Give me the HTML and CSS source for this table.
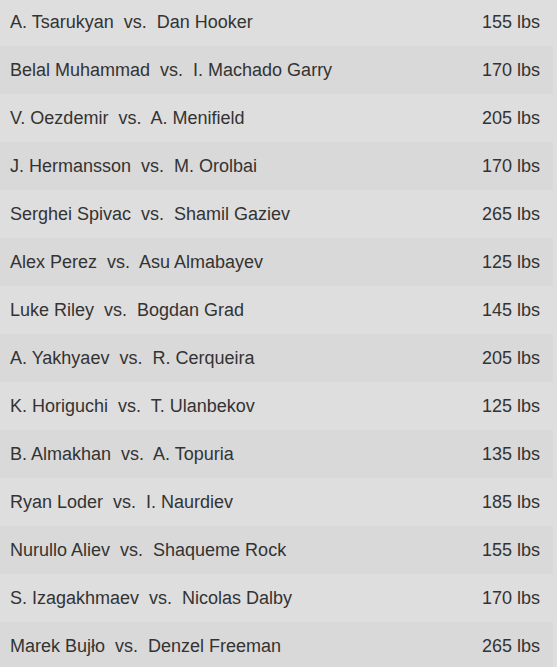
FILE: index.html
```html
<!DOCTYPE html>
<html>
<head>
<meta charset="utf-8">
<link rel="stylesheet" href="styles.css">
</head>
<body>
<div class="list">
  <div class="row"><span class="fight">A. Tsarukyan  vs.  Dan Hooker</span><span class="weight">155 lbs</span></div>
  <div class="row"><span class="fight">Belal Muhammad  vs.  I. Machado Garry</span><span class="weight">170 lbs</span></div>
  <div class="row"><span class="fight">V. Oezdemir  vs.  A. Menifield</span><span class="weight">205 lbs</span></div>
  <div class="row"><span class="fight">J. Hermansson  vs.  M. Orolbai</span><span class="weight">170 lbs</span></div>
  <div class="row"><span class="fight">Serghei Spivac  vs.  Shamil Gaziev</span><span class="weight">265 lbs</span></div>
  <div class="row"><span class="fight">Alex Perez  vs.  Asu Almabayev</span><span class="weight">125 lbs</span></div>
  <div class="row"><span class="fight">Luke Riley  vs.  Bogdan Grad</span><span class="weight">145 lbs</span></div>
  <div class="row"><span class="fight">A. Yakhyaev  vs.  R. Cerqueira</span><span class="weight">205 lbs</span></div>
  <div class="row"><span class="fight">K. Horiguchi  vs.  T. Ulanbekov</span><span class="weight">125 lbs</span></div>
  <div class="row"><span class="fight">B. Almakhan  vs.  A. Topuria</span><span class="weight">135 lbs</span></div>
  <div class="row"><span class="fight">Ryan Loder  vs.  I. Naurdiev</span><span class="weight">185 lbs</span></div>
  <div class="row"><span class="fight">Nurullo Aliev  vs.  Shaqueme Rock</span><span class="weight">155 lbs</span></div>
  <div class="row"><span class="fight">S. Izagakhmaev  vs.  Nicolas Dalby</span><span class="weight">170 lbs</span></div>
  <div class="row"><span class="fight">Marek Bujło  vs.  Denzel Freeman</span><span class="weight">265 lbs</span></div>
</div>
</body>
</html>
```
FILE: styles.css
```css
html, body {
  margin: 0;
  padding: 0;
  background: #dedede;
}
body {
  font-family: "Liberation Sans", Arial, sans-serif;
  color: #333333;
  overflow: hidden;
}
.list {
  width: 553px;
  margin-top: -2px;
}
.row {
  display: flex;
  justify-content: space-between;
  align-items: center;
  height: 48px;
  padding: 0 13px 0 10px;
  box-sizing: border-box;
  font-size: 18px;
}
.row:nth-child(even) {
  background: #d9d9d9;
}
.fight {
  white-space: pre;
}
```
